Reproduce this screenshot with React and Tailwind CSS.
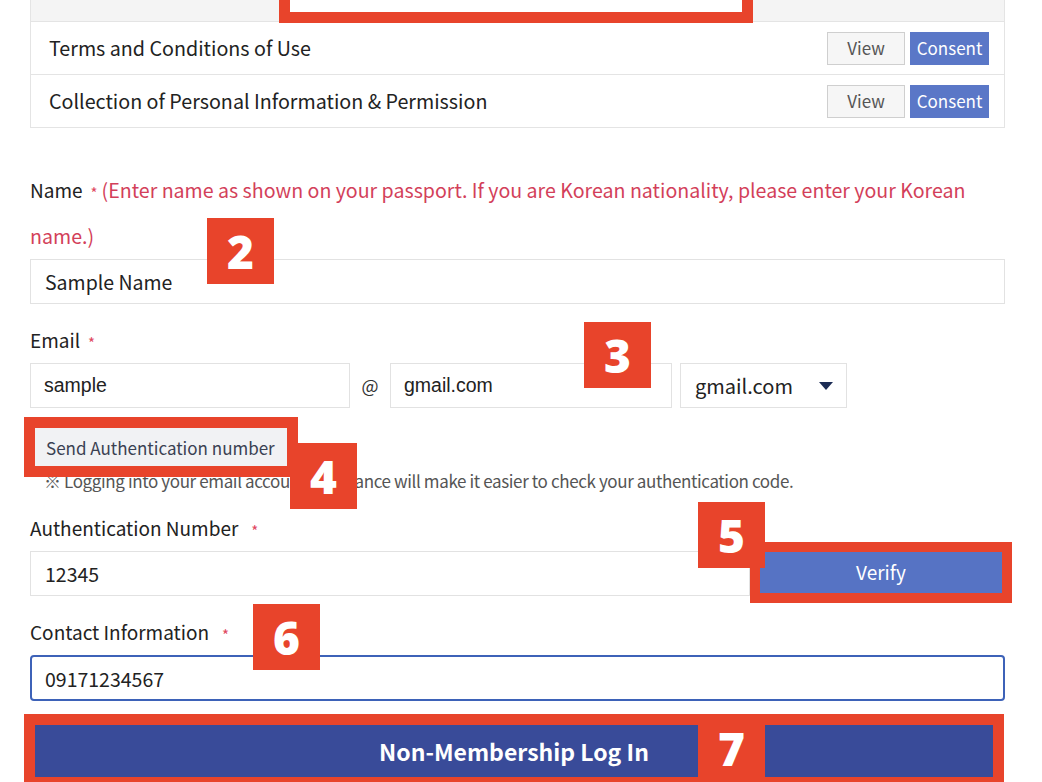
import { useState } from "react";

const RED = "border-[#e8442b]";

function Badge({ n, className }) {
  return (
    <div
      className={`absolute w-[67px] h-[66px] bg-[#e8442b] flex items-center justify-center text-white text-[46px] font-extrabold leading-none font-['Open_Sans',sans-serif] ${className}`}
    >
      {n}
    </div>
  );
}

function Star({ className = "ml-[8px]" }) {
  return <span className={`text-[#e0475f] text-[15px] leading-none align-middle ${className}`}>*</span>;
}

function TermRow({ title }) {
  return (
    <div className="h-[53px] border-t border-[#e4e4e4] flex items-center justify-between pl-[18px] pr-[15px]">
      <span className="text-[19.7px] text-[#222]">{title}</span>
      <div className="flex gap-[5px]">
        <button className="w-[78px] h-[33px] border border-[#cfcfcf] bg-[#f6f6f6] text-[#555] text-[17px]">
          View
        </button>
        <button className="w-[79px] h-[33px] bg-[#5a77c7] text-white text-[17px]">
          Consent
        </button>
      </div>
    </div>
  );
}

export default function App() {
  const [phone, setPhone] = useState("09171234567");

  return (
    <div className="relative w-[1042px] h-[782px] overflow-hidden bg-white px-[30px] font-['Noto_Sans_CJK_KR','Noto_Sans',sans-serif]">
      {/* terms table */}
      <div className="w-[975px] border-x border-b border-[#e4e4e4]">
        <div className="h-[21px] bg-[#f4f4f4]" />
        <TermRow title="Terms and Conditions of Use" />
        <TermRow title="Collection of Personal Information & Permission" />
      </div>

      {/* name */}
      <div className="mt-[39px] text-[19px] leading-[46px] text-[#222]">
        Name
        <Star />
        <span className="ml-[4px] text-[19.6px] text-[#d33f5a]">
          (Enter name as shown on your passport. If you are Korean nationality, please enter your Korean name.)
        </span>
      </div>
      <input
        readOnly
        value="Sample Name"
        className="w-[975px] h-[45px] border border-[#e2e2e2] px-[14px] text-[19.5px] text-[#222] outline-none"
      />

      {/* email */}
      <div className="mt-[13px] text-[19px] leading-[46px] text-[#222]">
        Email
        <Star />
      </div>
      <div className="flex items-center h-[45px]">
        <input
          readOnly
          value="sample"
          className="w-[320px] h-full border border-[#e2e2e2] px-[13px] text-[19.5px] text-[#222] font-['Liberation_Sans',sans-serif] outline-none"
        />
        <span className="w-[40px] text-center text-[18px] text-[#333]">@</span>
        <input
          readOnly
          value="gmail.com"
          className="w-[282px] h-full border border-[#e2e2e2] px-[13px] text-[19.5px] text-[#222] font-['Liberation_Sans',sans-serif] outline-none"
        />
        <div className="ml-[8px] w-[167px] h-full border border-[#e2e2e2] flex items-center justify-between pl-[14px] pr-[12px] text-[20px] text-[#222]">
          gmail.com
          <svg width="16" height="10" viewBox="0 0 16 10">
            <path d="M1 1h14L8 9z" fill="#1c2c55" />
          </svg>
        </div>
      </div>

      <div className="relative mt-[20px] ml-[5px] w-[253px] h-[39px]">
        <button className="w-full h-full bg-[#f1f2f4] text-left pl-[11px] text-[17px] text-[#3a4152]">
          Send Authentication number
        </button>
      </div>
      <p className="h-[28px] pl-[14px] text-[17px] leading-[28px] text-[#555] tracking-[-0.38px]">
        ※ Logging into your email account in advance will make it easier to check your authentication code.
      </p>
      <div className="relative">
        <div className={`absolute left-[-6px] top-[-78px] w-[274px] h-[60px] border-[11px] ${RED}`} />
      </div>

      {/* auth number */}
      <div className="mt-[10px] text-[19px] leading-[46px] text-[#222]">
        Authentication Number
        <Star className="ml-[13px]" />
      </div>
      <div className="flex h-[45px] gap-[3px]">
        <input
          readOnly
          value="12345"
          className="flex-1 h-full border border-[#e2e2e2] px-[14px] text-[19.5px] text-[#222] outline-none"
        />
        <div className="relative w-[242px] h-[41px] mt-[1px] mr-[10px] ml-[7px]">
          <button className="w-full h-full bg-[#5673c4] text-white text-[19px]">Verify</button>
          <div className={`absolute -inset-[10px] border-[10px] ${RED}`} />
        </div>
      </div>

      {/* contact */}
      <div className="mt-[13px] text-[19px] leading-[46px] text-[#222]">
        Contact Information
        <Star className="ml-[13px]" />
      </div>
      <input
        value={phone}
        onChange={(e) => setPhone(e.target.value)}
        className="w-[975px] h-[46px] border-2 border-[#3d62b8] rounded-[4px] px-[13px] text-[19.5px] text-[#222] outline-none"
      />

      {/* login */}
      <div className="relative mt-[24px] ml-[5px] w-[958px] h-[52px]">
        <button className="w-full h-full bg-[#394b99] text-white text-[23px] font-bold">
          Non-Membership Log In
        </button>
        <div className={`absolute -inset-[11px] border-[11px] ${RED}`} />
      </div>

      {/* annotations */}
      <div className={`absolute left-[279px] top-[-30px] w-[474px] h-[53px] bg-white border-[11px] ${RED}`} />
      <Badge n="2" className="left-[207px] top-[218px]" />
      <Badge n="3" className="left-[584px] top-[322px]" />
      <Badge n="4" className="left-[290px] top-[443px]" />
      <Badge n="5" className="left-[698px] top-[502px]" />
      <Badge n="6" className="left-[253px] top-[604px]" />
      <Badge n="7" className="left-[698px] top-[715px]" />
    </div>
  );
}
